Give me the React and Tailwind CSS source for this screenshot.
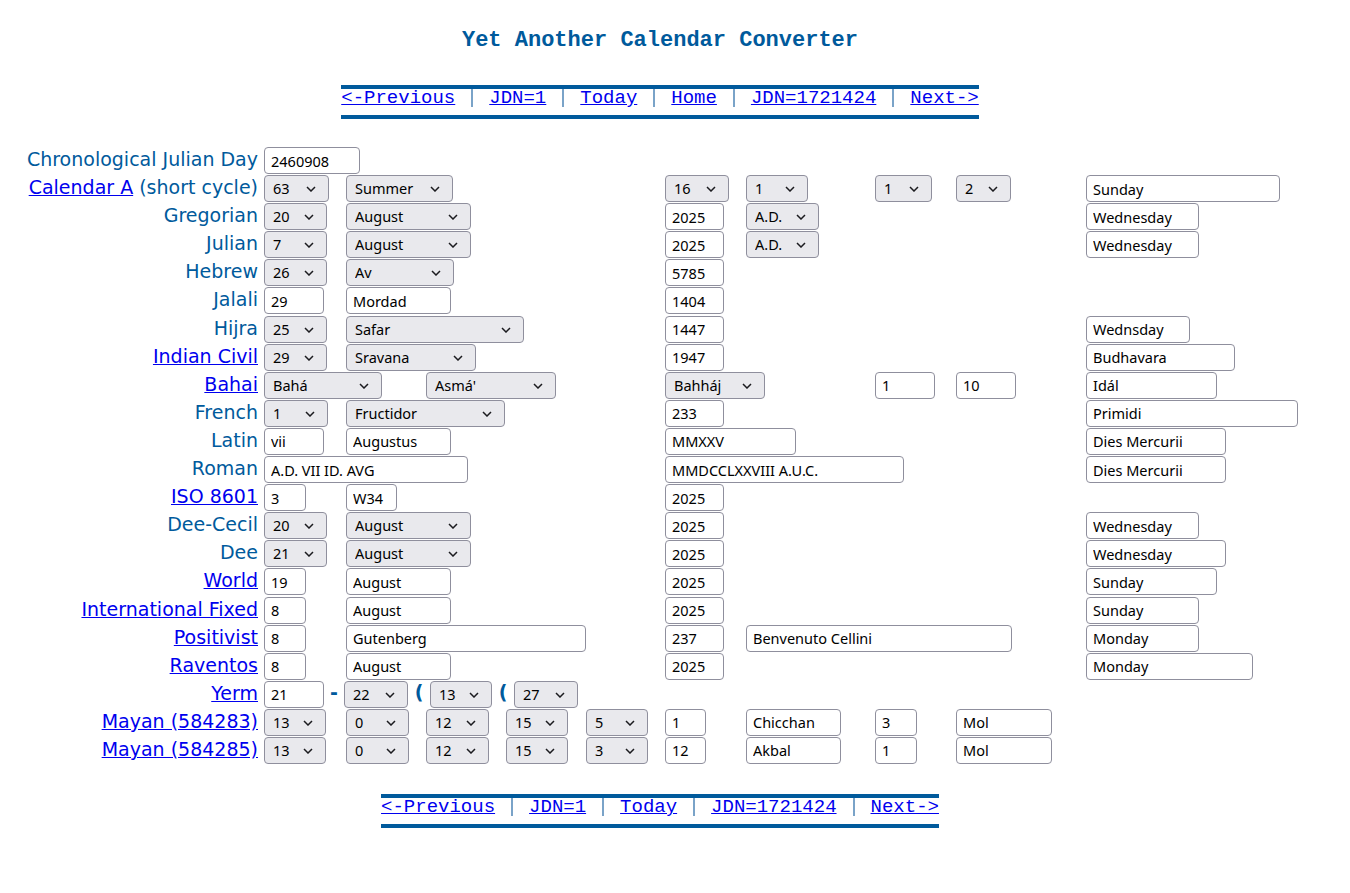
import React from "react";

const LABEL = "font-['DejaVu_Sans',sans-serif] text-[19px] leading-[22px] text-[#005a9c]";
const CTRL = "font-['Noto_Sans',sans-serif] text-[14.5px] text-black";

function Sel({ value, w }) {
  return (
    <div className="relative h-[27px] flex-none" style={{ width: w }}>
      <select
        defaultValue={value}
        className={`${CTRL} h-full w-full appearance-none rounded-[4px] border border-[#8f8f9d] bg-[#e9e9ed] pl-[8px] pr-6 leading-[25px] outline-none`}
      >
        <option value={value}>{value}</option>
      </select>
      <svg
        className="pointer-events-none absolute right-[13px] top-[11px]"
        width="10"
        height="6"
        viewBox="0 0 10 6"
      >
        <polyline points="1,1 5,5 9,1" fill="none" stroke="#1b1b1f" strokeWidth="1.5" />
      </svg>
    </div>
  );
}

function Inp({ value, w }) {
  return (
    <input
      defaultValue={value}
      style={{ width: w }}
      className={`${CTRL} h-[27px] flex-none rounded-[4px] border border-[#8f8f9d] bg-white pl-[6px] outline-none`}
    />
  );
}

const START = {
  2: "col-start-2",
  3: "col-start-3",
  4: "col-start-4",
  5: "col-start-5",
  6: "col-start-6",
  7: "col-start-7",
  8: "col-start-8",
  9: "col-start-9",
  10: "col-start-10",
  11: "col-start-11",
};

function Cell({ item }) {
  const [col, kind, value, w] = item;
  return (
    <div className={`${START[col]} flex min-w-0`}>
      {kind === "s" ? <Sel value={value} w={w} /> : <Inp value={value} w={w} />}
    </div>
  );
}

const greg = (d) => [
  [2, "s", d, 63],
  [3, "s", "August", 125],
  [7, "i", "2025", 59],
  [8, "s", "A.D.", 73],
  [11, "i", "Wednesday", 113],
];

const mayan = (a, b, c, d, e) => [
  [2, "s", "13", 62],
  [3, "s", "0", 63],
  [4, "s", "12", 63],
  [5, "s", "15", 62],
  [6, "s", a, 62],
  [7, "i", b, 41],
  [8, "i", c, 95],
  [9, "i", d, 42],
  [10, "i", e, 96],
];

const rows = [
  { label: "Chronological Julian Day", items: [[2, "i", "2460908", 96]] },
  {
    label: "Calendar A",
    link: true,
    extra: " (short cycle)",
    items: [
      [2, "s", "63", 65],
      [3, "s", "Summer", 107],
      [7, "s", "16", 64],
      [8, "s", "1", 62],
      [9, "s", "1", 57],
      [10, "s", "2", 55],
      [11, "i", "Sunday", 194],
    ],
  },
  { label: "Gregorian", items: greg("20") },
  { label: "Julian", items: greg("7") },
  {
    label: "Hebrew",
    items: [
      [2, "s", "26", 63],
      [3, "s", "Av", 108],
      [7, "i", "5785", 59],
    ],
  },
  {
    label: "Jalali",
    items: [
      [2, "i", "29", 60],
      [3, "i", "Mordad", 105],
      [7, "i", "1404", 59],
    ],
  },
  {
    label: "Hijra",
    items: [
      [2, "s", "25", 63],
      [3, "s", "Safar", 178],
      [7, "i", "1447", 59],
      [11, "i", "Wednsday", 104],
    ],
  },
  {
    label: "Indian Civil",
    link: true,
    items: [
      [2, "s", "29", 63],
      [3, "s", "Sravana", 130],
      [7, "i", "1947", 59],
      [11, "i", "Budhavara", 149],
    ],
  },
  {
    label: "Bahai",
    link: true,
    items: [
      [2, "s", "Bahá", 118],
      [4, "s", "Asmá'", 130],
      [7, "s", "Bahháj", 100],
      [9, "i", "1", 60],
      [10, "i", "10", 60],
      [11, "i", "Idál", 131],
    ],
  },
  {
    label: "French",
    items: [
      [2, "s", "1", 64],
      [3, "s", "Fructidor", 159],
      [7, "i", "233", 59],
      [11, "i", "Primidi", 212],
    ],
  },
  {
    label: "Latin",
    items: [
      [2, "i", "vii", 60],
      [3, "i", "Augustus", 105],
      [7, "i", "MMXXV", 131],
      [11, "i", "Dies Mercurii", 140],
    ],
  },
  {
    label: "Roman",
    items: [
      [2, "i", "A.D. VII ID. AVG", 204],
      [7, "i", "MMDCCLXXVIII A.U.C.", 239],
      [11, "i", "Dies Mercurii", 140],
    ],
  },
  {
    label: "ISO 8601",
    link: true,
    items: [
      [2, "i", "3", 42],
      [3, "i", "W34", 51],
      [7, "i", "2025", 59],
    ],
  },
  {
    label: "Dee-Cecil",
    items: [
      [2, "s", "20", 63],
      [3, "s", "August", 125],
      [7, "i", "2025", 59],
      [11, "i", "Wednesday", 113],
    ],
  },
  {
    label: "Dee",
    items: [
      [2, "s", "21", 63],
      [3, "s", "August", 125],
      [7, "i", "2025", 59],
      [11, "i", "Wednesday", 140],
    ],
  },
  {
    label: "World",
    link: true,
    items: [
      [2, "i", "19", 42],
      [3, "i", "August", 105],
      [7, "i", "2025", 59],
      [11, "i", "Sunday", 131],
    ],
  },
  {
    label: "International Fixed",
    link: true,
    items: [
      [2, "i", "8", 42],
      [3, "i", "August", 105],
      [7, "i", "2025", 59],
      [11, "i", "Sunday", 113],
    ],
  },
  {
    label: "Positivist",
    link: true,
    items: [
      [2, "i", "8", 42],
      [3, "i", "Gutenberg", 240],
      [7, "i", "237", 59],
      [8, "i", "Benvenuto Cellini", 266],
      [11, "i", "Monday", 113],
    ],
  },
  {
    label: "Raventos",
    link: true,
    items: [
      [2, "i", "8", 42],
      [3, "i", "August", 105],
      [7, "i", "2025", 59],
      [11, "i", "Monday", 167],
    ],
  },
  { label: "Yerm", link: true, yerm: true, items: [] },
  { label: "Mayan (584283)", link: true, items: mayan("5", "1", "Chicchan", "3", "Mol") },
  { label: "Mayan (584285)", link: true, items: mayan("3", "12", "Akbal", "1", "Mol") },
];

function Nav({ links }) {
  return (
    <div className="flex justify-center">
      <div className="flex h-[34px] items-start border-y-4 border-[#005a9c] font-['Liberation_Mono',monospace] text-[19px] leading-[18px] whitespace-pre">
        {links.map((l, i) => (
          <React.Fragment key={l}>
            {i > 0 && (
              <span className="flex h-[18px] w-[34px] justify-center">
                <span className="w-[2px] bg-[#7aa3c8]" />
              </span>
            )}
            <a href="#" className="text-[#0000ee] underline">
              {l}
            </a>
          </React.Fragment>
        ))}
      </div>
    </div>
  );
}

export default function App() {
  return (
    <div className="min-h-[893px] w-[1320px] bg-white pt-[28px]">
      <h1 className="text-center font-['Liberation_Mono',monospace] text-[22px] font-bold leading-[25px] text-[#005a9c]">
        Yet Another Calendar Converter
      </h1>

      <div className="mt-[32px]">
        <Nav links={["<-Previous", "JDN=1", "Today", "Home", "JDN=1721424", "Next->"]} />
      </div>

      <div className="mt-[28px] grid grid-cols-[264px_82px_80px_80px_80px_79px_81px_129px_81px_130px_1fr] auto-rows-[28.1px]">
        {rows.map((r) => (
          <React.Fragment key={r.label}>
            <div className={`col-start-1 pr-[6px] pt-[1px] text-right whitespace-nowrap ${LABEL}`}>
              {r.link ? (
                <a href="#" className="text-[#0000ee] underline">
                  {r.label}
                </a>
              ) : (
                r.label
              )}
              {r.extra}
            </div>
            {r.yerm ? (
              <div className="col-start-2 col-span-6 flex items-start">
                <Inp value="21" w={60} />
                <span className={`w-[20px] flex-none text-center font-bold ${LABEL}`}>-</span>
                <Sel value="22" w={64} />
                <span className={`w-[22px] flex-none text-center font-bold ${LABEL}`}>(</span>
                <Sel value="13" w={62} />
                <span className={`w-[22px] flex-none text-center font-bold ${LABEL}`}>(</span>
                <Sel value="27" w={64} />
              </div>
            ) : (
              r.items.map((it, i) => <Cell key={i} item={it} />)
            )}
          </React.Fragment>
        ))}
      </div>

      <div className="mt-[29px]">
        <Nav links={["<-Previous", "JDN=1", "Today", "JDN=1721424", "Next->"]} />
      </div>
    </div>
  );
}
